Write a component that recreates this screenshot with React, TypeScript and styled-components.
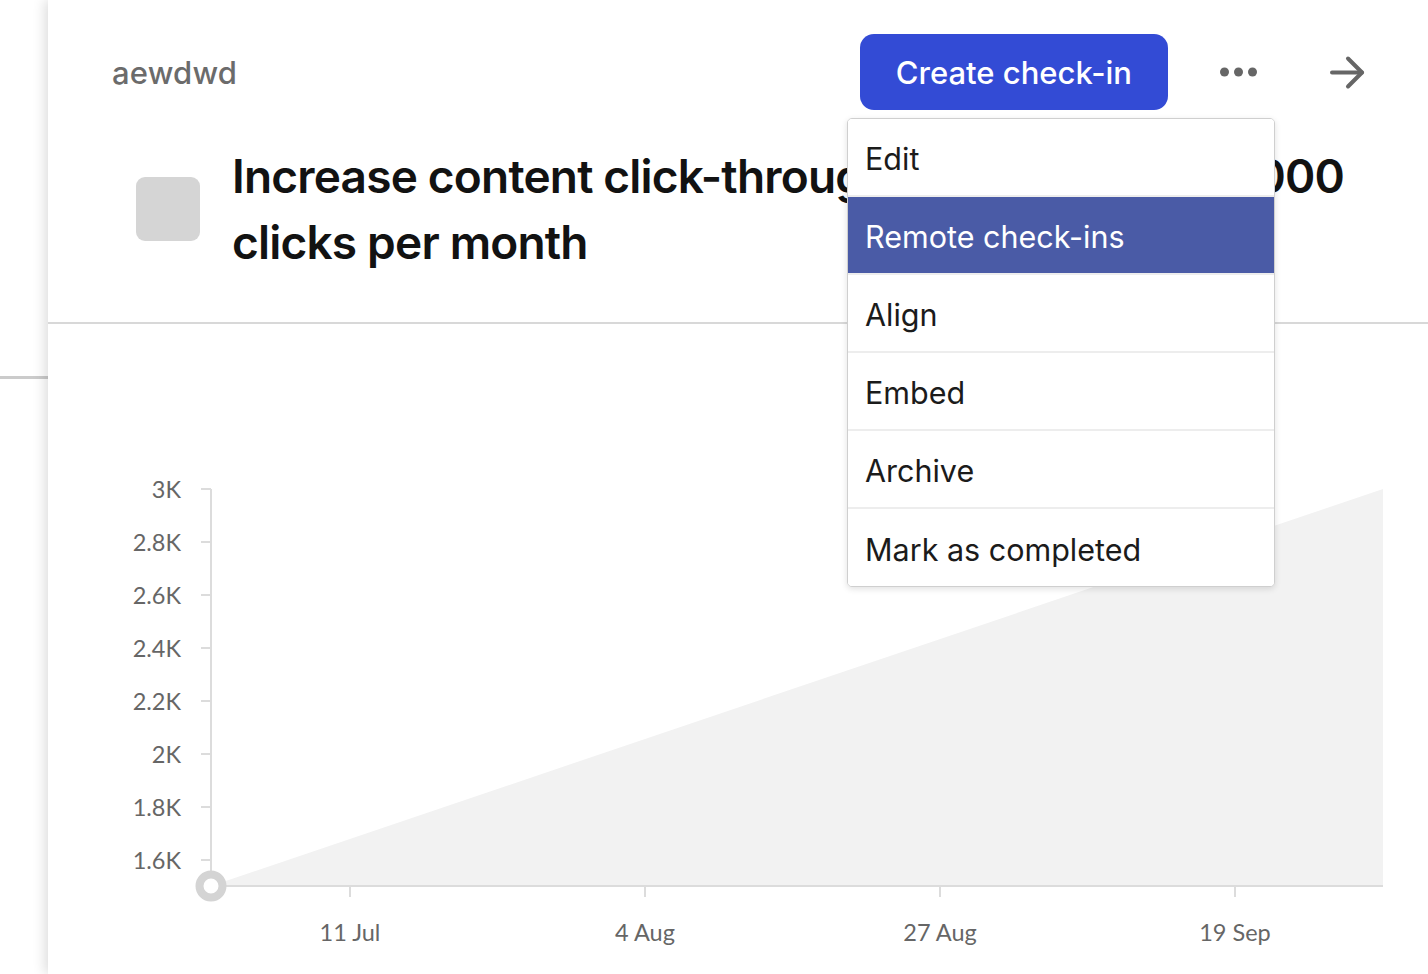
import React from "react";
import styled, { createGlobalStyle } from "styled-components";

const GlobalStyle = createGlobalStyle`
  html, body { margin: 0; padding: 0; background: #ffffff; }
  body { font-family: "Inter", "Noto Sans", sans-serif; -webkit-font-smoothing: antialiased; }
  * { box-sizing: border-box; }
`;

const Page = styled.div`
  display: flex;
  width: 100%;
  height: 974px;
  overflow: hidden;
  background: #ffffff;
`;

const Rail = styled.div`
  width: 48px;
  flex: 0 0 48px;
  display: flex;
  flex-direction: column;
  padding-top: 376px;
  background: #ffffff;
`;

const RailRule = styled.div`
  height: 3px;
  background: #cbcbcb;
`;

const Panel = styled.div`
  position: relative;
  flex: 1;
  display: flex;
  flex-direction: column;
  background: #ffffff;
  box-shadow: -3px 0 12px rgba(0, 0, 0, 0.14);
  z-index: 1;
`;

const Header = styled.div`
  display: flex;
  align-items: center;
  padding: 34px 63px 0 64px;
`;

const OwnerName = styled.div`
  flex: 1;
  font-size: 31px;
  font-weight: 500;
  color: #6b6b6b;
  letter-spacing: 0.2px;
`;

const PrimaryButton = styled.button`
  height: 76px;
  padding: 0 36px;
  border: none;
  border-radius: 14px;
  background: #334bd5;
  color: #ffffff;
  font-family: "Inter", sans-serif;
  font-size: 31px;
  font-weight: 500;
  cursor: pointer;
`;

const IconButton = styled.button<{ $gap: number; $w: number }>`
  margin-left: ${(p) => p.$gap}px;
  width: ${(p) => p.$w}px;
  padding: 0;
  border: none;
  background: transparent;
  display: flex;
  align-items: center;
  justify-content: center;
  color: #666666;
`;

const TitleRow = styled.div`
  display: flex;
  align-items: center;
  gap: 32px;
  margin-top: 33px;
  padding: 0 64px 47px 88px;
`;

const Swatch = styled.div`
  width: 64px;
  height: 64px;
  flex: 0 0 64px;
  border-radius: 9px;
  background: #d5d5d5;
`;

const Title = styled.h1`
  margin: 0;
  font-size: 46px;
  line-height: 66px;
  font-weight: 600;
  letter-spacing: -0.8px;
  color: #121212;
`;

const Divider = styled.div`
  height: 2px;
  background: #d8d8d8;
`;

const ChartWrap = styled.div`
  flex: 1;
  display: flex;
`;

const Menu = styled.div`
  position: absolute;
  top: 118px;
  left: 799px;
  width: 428px;
  background: #ffffff;
  border: 1px solid #cfcfcf;
  border-radius: 5px;
  box-shadow: 0 2px 6px rgba(0, 0, 0, 0.12);
  overflow: hidden;
  z-index: 5;
`;

const MenuItem = styled.div<{ $active?: boolean }>`
  height: 78px;
  display: flex;
  align-items: center;
  padding: 3px 0 0 17px;
  font-size: 30.5px;
  font-weight: 400;
  color: ${(p) => (p.$active ? "#ffffff" : "#1b1b1b")};
  background: ${(p) => (p.$active ? "#4a5ba6" : "#ffffff")};
  border-bottom: 2px solid #ededed;
  &:last-child { border-bottom: none; height: 77px; }
`;

const AxisText = styled.text`
  font-family: "Lato", "Open Sans", sans-serif;
  font-size: 23.5px;
  fill: #666666;
`;

const yLabels = ["3K", "2.8K", "2.6K", "2.4K", "2.2K", "2K", "1.8K", "1.6K"];
const xLabels = [
  { x: 302, t: "11 Jul" },
  { x: 597, t: "4 Aug" },
  { x: 892, t: "27 Aug" },
  { x: 1187, t: "19 Sep" },
];

function Chart() {
  const axisX = 163;
  const top = 165;
  const base = 562;
  const right = 1335;
  return (
    <svg width="1380" height="650" viewBox="0 0 1380 650">
      <polygon points={`${axisX},${base} ${right},${top} ${right},${base}`} fill="#f2f2f2" />
      <line x1={axisX} y1={top} x2={axisX} y2={base} stroke="#dcdcdc" strokeWidth="2" />
      <line x1={axisX} y1={base} x2={right} y2={base} stroke="#dcdcdc" strokeWidth="2" />
      {yLabels.map((l, i) => {
        const y = top + 53 * i;
        return (
          <g key={l}>
            <line x1={153} y1={y} x2={axisX} y2={y} stroke="#dcdcdc" strokeWidth="2" />
            <AxisText x={133} y={y} textAnchor="end" dominantBaseline="central">
              {l}
            </AxisText>
          </g>
        );
      })}
      {xLabels.map((l) => (
        <g key={l.t}>
          <line x1={l.x} y1={base} x2={l.x} y2={base + 11} stroke="#dcdcdc" strokeWidth="2" />
          <AxisText x={l.x} y={608} textAnchor="middle" dominantBaseline="central">
            {l.t}
          </AxisText>
        </g>
      ))}
      <circle cx={axisX} cy={base} r="11.5" fill="#ffffff" stroke="#d4d4d4" strokeWidth="8" />
    </svg>
  );
}

const menuItems = ["Edit", "Remote check-ins", "Align", "Embed", "Archive", "Mark as completed"];

export default function App() {
  return (
    <>
      <GlobalStyle />
      <Page>
        <Rail>
          <RailRule />
        </Rail>
        <Panel>
          <Header>
            <OwnerName>aewdwd</OwnerName>
            <PrimaryButton>Create check-in</PrimaryButton>
            <IconButton $gap={52} $w={37} aria-label="More">
              <svg width="37" height="10" viewBox="0 0 37 10">
                <circle cx="4.5" cy="5" r="4.5" fill="currentColor" />
                <circle cx="18.5" cy="5" r="4.5" fill="currentColor" />
                <circle cx="32.5" cy="5" r="4.5" fill="currentColor" />
              </svg>
            </IconButton>
            <IconButton $gap={73} $w={35} aria-label="Open">
              <svg width="35" height="35" viewBox="0 0 35 35" fill="none" stroke="currentColor" strokeWidth="4" strokeLinecap="round" strokeLinejoin="round">
                <path d="M2 17.5 H32" />
                <path d="M18 3.5 L32 17.5 L18 31.5" />
              </svg>
            </IconButton>
          </Header>
          <TitleRow>
            <Swatch />
            <Title>Increase content click-through rate to at least 3,000 clicks per month</Title>
          </TitleRow>
          <Divider />
          <ChartWrap>
            <Chart />
          </ChartWrap>
          <Menu>
            {menuItems.map((m) => (
              <MenuItem key={m} $active={m === "Remote check-ins"}>
                {m}
              </MenuItem>
            ))}
          </Menu>
        </Panel>
      </Page>
    </>
  );
}
